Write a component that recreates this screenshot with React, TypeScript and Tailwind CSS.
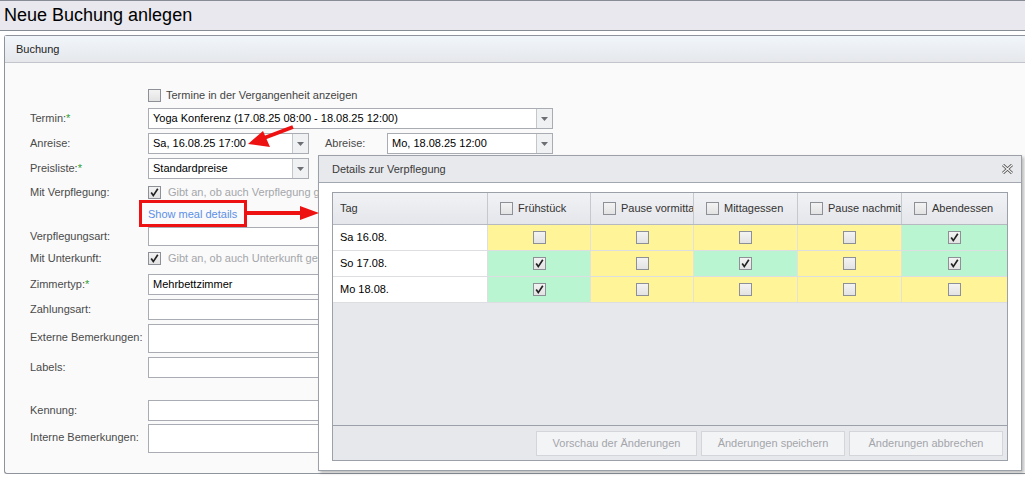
import type { ReactNode } from "react";

const font = { fontFamily: '"Liberation Sans", Arial, sans-serif' };

function Box({ checked = false }: { checked?: boolean }) {
  return (
    <svg width="13" height="13" viewBox="0 0 13 13" className="shrink-0">
      <defs>
        <linearGradient id="cbg" x1="0" y1="0" x2="0" y2="1">
          <stop offset="0" stopColor="#f4f4f4" />
          <stop offset="1" stopColor="#e2e2e2" />
        </linearGradient>
      </defs>
      <rect x="0.5" y="0.5" width="12" height="12" fill="url(#cbg)" stroke="#8d9096" />
      {checked && (
        <path d="M3.2 6.6 L5.3 9.6 L9.8 2.8" fill="none" stroke="#222" strokeWidth="1.7" />
      )}
    </svg>
  );
}

function Combo({ value, width }: { value: string; width: string }) {
  return (
    <div className={`flex h-[21px] ${width} border border-[#a9acb2] bg-white`}>
      <div className="flex-1 px-[4px] leading-[19px] text-[11px] text-black">{value}</div>
      <div className="flex w-[16px] items-center justify-center border-l border-[#c3c6cb] bg-[#f0f1f3]">
        <svg width="7" height="4" viewBox="0 0 7 4">
          <path d="M0 0 H7 L3.5 4 Z" fill="#6b6e73" />
        </svg>
      </div>
    </div>
  );
}

function Field({ value = "", h = "h-[21px]" }: { value?: string; h?: string }) {
  return (
    <div className={`${h} w-[404px] border border-[#a9acb2] bg-white px-[4px] leading-[19px] text-[11px] text-black`}>
      {value}
    </div>
  );
}

function Row({ label, req, cls = "h-[21px] mt-[4px]", top = false, children }: { label: string; req?: boolean; cls?: string; top?: boolean; children?: ReactNode }) {
  return (
    <div className={`flex ${cls} ${top ? "items-start" : "items-center"}`}>
      <div className={`w-[118px] shrink-0 text-[11px] text-[#4a4a4a] ${top ? "pt-[5px]" : ""}`}>
        {label}
        {req && <span className="text-[#2ea02e]">*</span>}
      </div>
      {children}
    </div>
  );
}

const cols = ["Frühstück", "Pause vormittag", "Mittagessen", "Pause nachmittag", "Abendessen"];
const days: { tag: string; v: boolean[] }[] = [
  { tag: "Sa 16.08.", v: [false, false, false, false, true] },
  { tag: "So 17.08.", v: [true, false, true, false, true] },
  { tag: "Mo 18.08.", v: [true, false, false, false, false] },
];

function MealDialog() {
  return (
    <div className="absolute left-[318px] top-[155px] flex h-[316px] w-[704px] flex-col border border-[#9ca0a8] bg-white shadow-[2px_2px_3px_rgba(0,0,0,0.25)]">
      <div className="flex h-[27px] items-center justify-between border-b border-[#a3a7ae] bg-[#e8e9ed] pl-[13px] pr-[8px]">
        <span className="text-[11px] text-[#3a3a3a]">Details zur Verpflegung</span>
        <svg width="11" height="10" viewBox="0 0 11 10">
          <path d="M1 1 L10 9 M10 1 L1 9" stroke="#555" strokeWidth="3" />
          <path d="M1 1 L10 9 M10 1 L1 9" stroke="#f4f4f4" strokeWidth="1.2" />
        </svg>
      </div>
      <div className="flex flex-1 px-[13px] pb-[9px] pt-[9px]">
        <div className="flex flex-1 flex-col border border-[#9ca0a8] bg-[#e7e8ec]">
          <div className="grid h-[32px] grid-cols-[155px_103px_103px_104px_104px_1fr] border-b border-[#b6b9bf] bg-gradient-to-b from-[#f1f2f5] to-[#e5e6eb] text-[11px] text-[#333]">
            <div className="flex items-center border-r border-[#c5c8cd] pl-[7px]">Tag</div>
            {cols.map((c, i) => (
              <div key={c} className={`flex items-center gap-[5px] overflow-hidden whitespace-nowrap pl-[12px] ${i < 4 ? "border-r border-[#c5c8cd]" : ""}`}>
                <Box />
                <span>{c}</span>
              </div>
            ))}
          </div>
          {days.map((d) => (
            <div key={d.tag} className="grid h-[26px] grid-cols-[155px_103px_103px_104px_104px_1fr] border-b border-[#dcdee2] text-[11px]">
              <div className="flex items-center border-r border-[#dcdee2] bg-white pl-[7px] text-black">{d.tag}</div>
              {d.v.map((on, i) => (
                <div key={i} className={`flex items-center justify-center ${i < 4 ? "border-r border-[#e2e2d8]" : ""} ${on ? "bg-[#b8f5d0]" : "bg-[#fff598]"}`}>
                  <Box checked={on} />
                </div>
              ))}
            </div>
          ))}
          <div className="flex-1" />
          <div className="flex h-[35px] items-center justify-end gap-[4px] border-t border-[#9ca0a8] pr-[4px] text-[11px] text-[#a3a5aa]">
            <div className="flex h-[25px] w-[161px] items-center justify-center border border-[#d3d5da] bg-[#f3f4f6]">Vorschau der Änderungen</div>
            <div className="flex h-[25px] w-[144px] items-center justify-center border border-[#d3d5da] bg-[#f3f4f6]">Änderungen speichern</div>
            <div className="flex h-[25px] w-[154px] items-center justify-center border border-[#d3d5da] bg-[#f3f4f6]">Änderungen abbrechen</div>
          </div>
        </div>
      </div>
    </div>
  );
}

export default function App() {
  return (
    <div className="relative h-[478px] w-[1025px] overflow-hidden bg-white" style={font}>
      <div className="flex h-[31px] items-center border-y border-[#878c95] bg-[#e8e8ee] pl-[4px] text-[18px] text-black">
        Neue Buchung anlegen
      </div>
      <div className="ml-[4px] mt-[4px] h-[439px] rounded-tl-[3px] rounded-bl-[3px] border border-r-0 border-[#8f939b] bg-[#fafafa]">
        <div className="flex h-[27px] items-center border-b border-[#c2c5cb] bg-gradient-to-b from-[#f1f6fa] to-[#e5e7eb] pl-[11px] text-[11px] text-[#222]">
          Buchung
        </div>
        <div className="flex flex-col pl-[25px] pt-[23px]">
          <div className="flex h-[18px] items-center pl-[118px]">
            <Box />
            <span className="ml-[5px] text-[11px] text-[#444]">Termine in der Vergangenheit anzeigen</span>
          </div>
          <Row label="Termin:" req>
            <Combo value="Yoga Konferenz (17.08.25 08:00 - 18.08.25 12:00)" width="w-[405px]" />
          </Row>
          <Row label="Anreise:">
            <Combo value="Sa, 16.08.25 17:00" width="w-[161px]" />
            <span className="ml-[16px] w-[62px] text-[11px] text-[#4a4a4a]">Abreise:</span>
            <Combo value="Mo, 18.08.25 12:00" width="w-[166px]" />
          </Row>
          <Row label="Preisliste:" req>
            <Combo value="Standardpreise" width="w-[161px]" />
          </Row>
          <Row label="Mit Verpflegung:" cls="h-[19px] mt-[4px]">
            <Box checked />
            <span className="ml-[7px] whitespace-nowrap text-[11px] text-[#a4a6aa]">Gibt an, ob auch Verpflegung gebucht werden soll</span>
          </Row>
          <div className="flex h-[24px] items-center pl-[118px] text-[11px] text-[#5b8fe8]">Show meal details</div>
          <Row label="Verpflegungsart:" cls="h-[19px] mt-[1px]">
            <Field h="h-[19px]" />
          </Row>
          <Row label="Mit Unterkunft:" cls="h-[19px] mt-[3px]">
            <Box checked />
            <span className="ml-[7px] whitespace-nowrap text-[11px] text-[#a4a6aa]">Gibt an, ob auch Unterkunft gebucht werden soll</span>
          </Row>
          <Row label="Zimmertyp:" req cls="h-[21px] mt-[6px]">
            <Field value="Mehrbettzimmer" />
          </Row>
          <Row label="Zahlungsart:">
            <Field />
          </Row>
          <Row label="Externe Bemerkungen:" cls="h-[29px] mt-[4px]" top>
            <Field h="h-[29px]" />
          </Row>
          <Row label="Labels:">
            <Field />
          </Row>
          <Row label="Kennung:" cls="h-[21px] mt-[22px]">
            <Field />
          </Row>
          <Row label="Interne Bemerkungen:" cls="h-[29px] mt-[3px]" top>
            <Field h="h-[29px]" />
          </Row>
        </div>
      </div>

      <MealDialog />

      {/* annotations */}
      <div className="absolute left-[139px] top-[200px] h-[27px] w-[108px] border-[3px] border-[#ee1111]" />
      <svg className="pointer-events-none absolute left-0 top-0" width="1025" height="478">
        <line x1="246" y1="213" x2="302" y2="213" stroke="#ee1111" strokeWidth="4" />
        <path d="M300 206 L319 213 L300 220 Z" fill="#ee1111" />
        <line x1="293" y1="127" x2="264" y2="138" stroke="#ee1111" strokeWidth="4" />
        <path d="M248 144 L263 131 L270 147 Z" fill="#ee1111" />
      </svg>
    </div>
  );
}
